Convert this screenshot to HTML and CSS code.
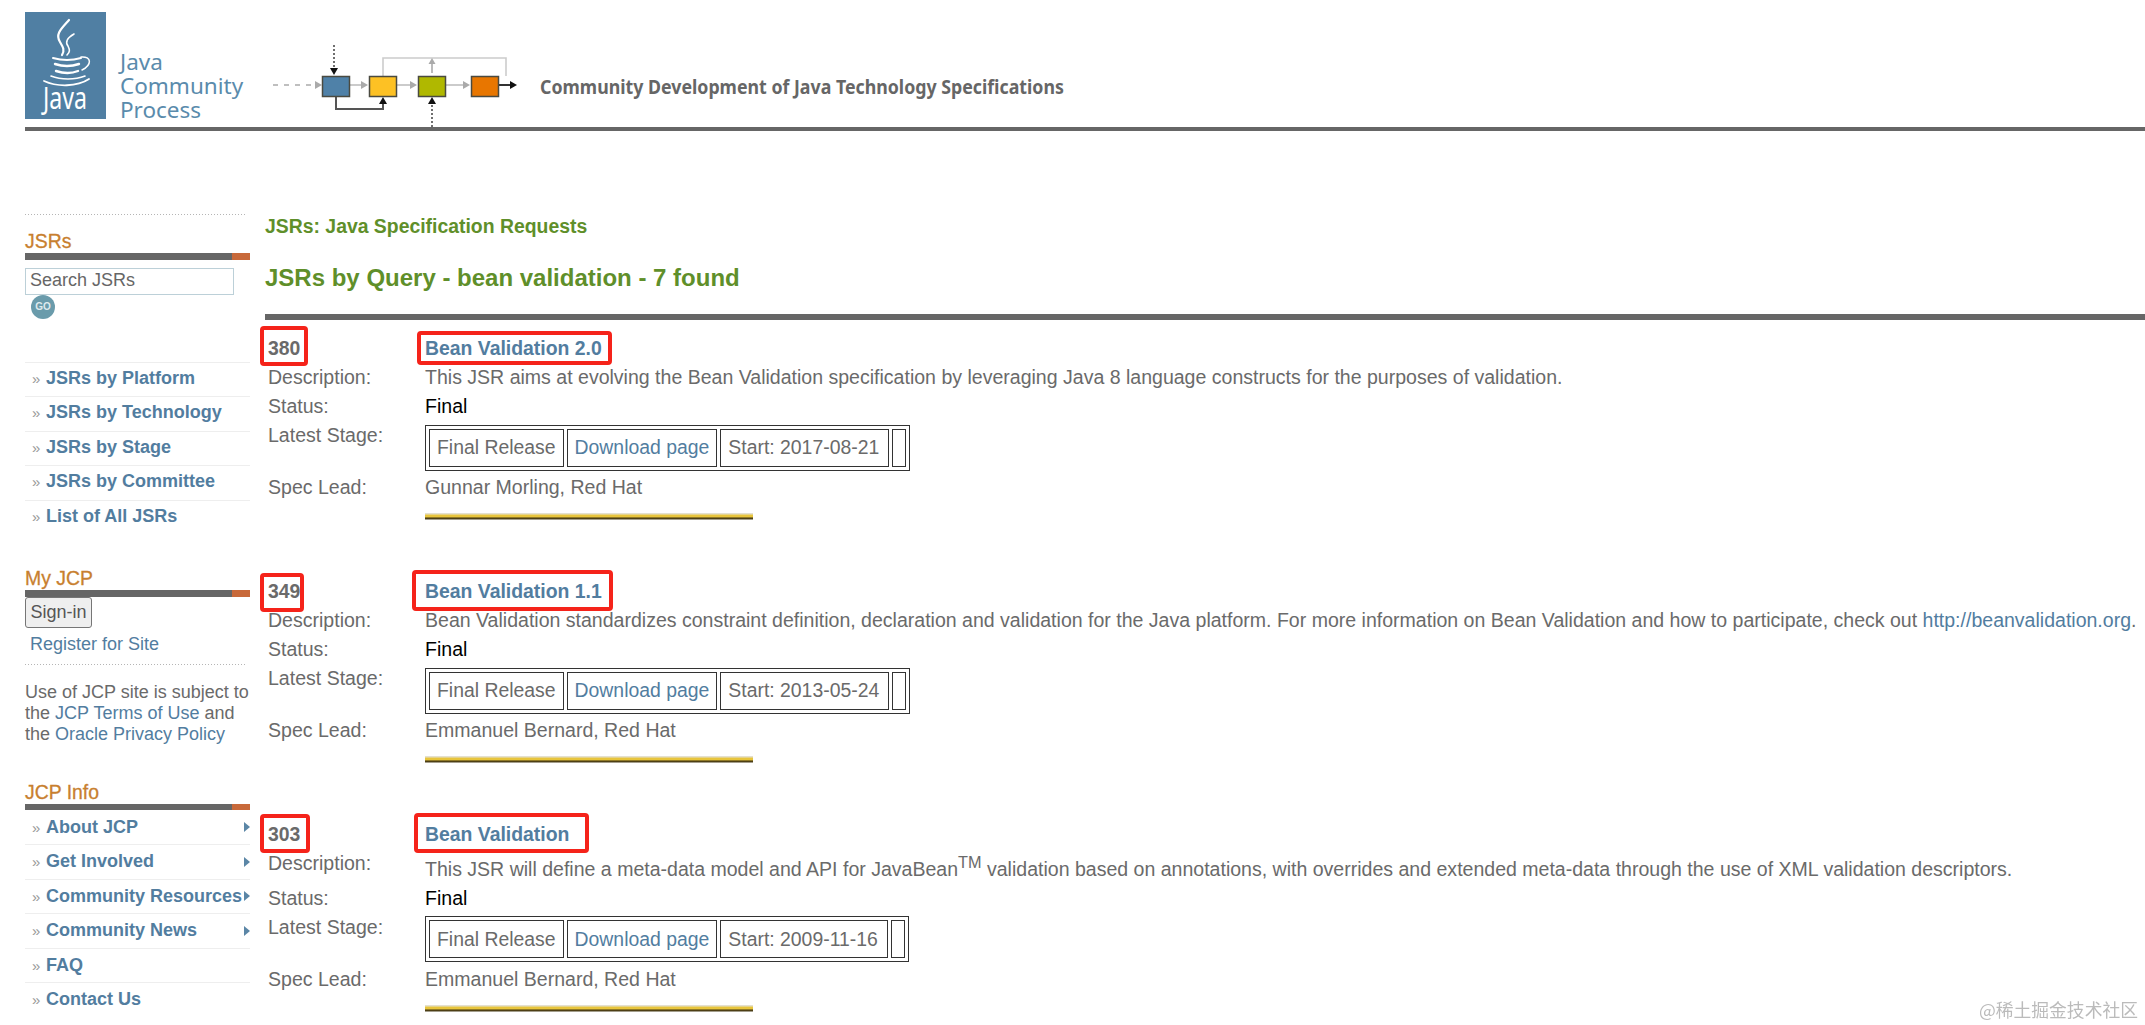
FILE: index.html
```html
<!DOCTYPE html>
<html lang="en">
<head>
<meta charset="utf-8">
<title>JSRs by Query - bean validation</title>
<link rel="stylesheet" href="styles.css">
</head>
<body>
<header class="site-header">
  <div class="banner">
    <svg class="java-logo" width="81" height="107" viewBox="0 0 81 107" aria-label="Java">
      <rect width="81" height="107" fill="#507fa3"/>
      <g fill="none" stroke="#fff" stroke-linecap="round">
        <path d="M44 8C36 17 30 22 35 30C38 35 40 38 37 43" stroke-width="2.2"/>
        <path d="M49 22C42 26 40 30 43 34C45 38 45 40 42 43" stroke-width="1.6"/>
        <path d="M28 46Q42 50 56 46" stroke-width="2"/>
        <path d="M56 45C67 44 67 53 57 58" stroke-width="1.5"/>
        <path d="M30 52Q42 56 54 52" stroke-width="2.4"/>
        <path d="M31 59Q43 63 53 59" stroke-width="2.4"/>
        <path d="M26 64C36 68 50 68 60 64" stroke-width="1.6"/>
        <path d="M19 69C32 75 52 75 64 67" stroke-width="1.8"/>
      </g>
      <text x="18" y="97" class="java-word" textLength="44" lengthAdjust="spacingAndGlyphs">Java</text>
    </svg>
    <div class="jcp-name">Java<br>Community<br>Process</div>
    <svg class="flow" width="246" height="82" viewBox="0 0 246 82" aria-hidden="true">
      <g fill="none" stroke="#bbb" stroke-width="1.6">
        <path d="M1 40H44" stroke-dasharray="5 6" stroke="#aaa"/>
        <path d="M78 40H90M125 40H139M174 40H192"/>
        <path d="M111 31V13H234V31" stroke="#ccc"/>
        <path d="M160 28V19" stroke="#aaa"/>
      </g>
      <g fill="#aaa">
        <path d="M50 40l-7-4v8z"/>
        <path d="M96 40l-7-4v8z"/>
        <path d="M145 40l-7-4v8z"/>
        <path d="M198 40l-7-4v8z"/>
        <path d="M160 13l-3.500 6h7z"/>
      </g>
      <g fill="none" stroke="#333" stroke-width="1.400">
        <path d="M62 0V23" stroke-dasharray="2 2"/>
        <path d="M160 82V58" stroke-dasharray="2 2"/>
        <path d="M64 51V64H111V57" stroke="#555" stroke-width="2"/>
        <path d="M227 40H238" stroke-width="2"/>
      </g>
      <g fill="#111">
        <path d="M62 30l-4-7h8z"/>
        <path d="M160 52l-4 7h8z"/>
        <path d="M111 52l-4 7h8z"/>
        <path d="M245 40l-7-4v8z"/>
      </g>
      <g stroke="#4a4a40" stroke-width="1.500">
        <rect x="50.500" y="31.500" width="27" height="20" fill="#4f81a8"/>
        <rect x="97.500" y="31.500" width="27" height="20" fill="#fdc124"/>
        <rect x="146.500" y="31.500" width="27" height="20" fill="#b0b800"/>
        <rect x="199.500" y="31.500" width="27" height="20" fill="#e87600"/>
      </g>
    </svg>
    <div class="tagline">Community Development of Java Technology Specifications</div>
  </div>
</header>

<div class="layout">
  <aside class="sidebar">
    <section class="side-section first">
      <h3 class="side-title">JSRs</h3>
      <div class="side-bar"></div>
      <form class="search">
        <input class="search-input" type="text" value="Search JSRs">
        <span class="go">GO</span>
      </form>
      <ul class="side-nav spaced">
        <li><a href="#">JSRs by Platform</a></li>
        <li><a href="#">JSRs by Technology</a></li>
        <li><a href="#">JSRs by Stage</a></li>
        <li><a href="#">JSRs by Committee</a></li>
        <li><a href="#">List of All JSRs</a></li>
      </ul>
    </section>

    <section class="side-section my-jcp">
      <h3 class="side-title">My JCP</h3>
      <div class="side-bar"></div>
      <button class="signin" type="button">Sign-in</button>
      <a class="register" href="#">Register for Site</a>
      <div class="terms">
        <div>Use of JCP site is subject to</div>
        <div>the <a href="#">JCP Terms of Use</a> and</div>
        <div>the <a href="#">Oracle Privacy Policy</a></div>
      </div>
    </section>

    <section class="side-section jcp-info">
      <h3 class="side-title">JCP Info</h3>
      <div class="side-bar"></div>
      <ul class="side-nav">
        <li class="more"><a href="#">About JCP</a></li>
        <li class="more"><a href="#">Get Involved</a></li>
        <li class="more"><a href="#">Community Resources</a></li>
        <li class="more"><a href="#">Community News</a></li>
        <li><a href="#">FAQ</a></li>
        <li><a href="#">Contact Us</a></li>
      </ul>
    </section>
  </aside>

  <main class="content">
    <div class="crumb">JSRs: Java Specification Requests</div>
    <h1 class="page-title">JSRs by Query - bean validation - 7 found</h1>
    <div class="page-rule"></div>

    <article class="jsr">
      <div class="jsr-num">380</div><div class="jsr-title"><a href="#">Bean Validation 2.0</a></div>
      <div class="lbl">Description:</div><div>This JSR aims at evolving the Bean Validation specification by leveraging Java 8 language constructs for the purposes of validation.</div>
      <div class="lbl">Status:</div><div class="final">Final</div>
      <div class="lbl">Latest Stage:</div>
      <div><table class="stage"><tr><td>Final Release</td><td><a href="#">Download page</a></td><td>Start: 2017-08-21</td><td></td></tr></table></div>
      <div class="lbl">Spec Lead:</div><div>Gunnar Morling, Red Hat</div>
      <div class="gold"></div>
      <span class="mark num-a"></span><span class="mark title-a"></span>
    </article>

    <article class="jsr">
      <div class="jsr-num">349</div><div class="jsr-title"><a href="#">Bean Validation 1.1</a></div>
      <div class="lbl">Description:</div><div>Bean Validation standardizes constraint definition, declaration and validation for the Java platform. For more information on Bean Validation and how to participate, check out <a href="#">http://beanvalidation.org</a>.</div>
      <div class="lbl">Status:</div><div class="final">Final</div>
      <div class="lbl">Latest Stage:</div>
      <div><table class="stage"><tr><td>Final Release</td><td><a href="#">Download page</a></td><td>Start: 2013-05-24</td><td></td></tr></table></div>
      <div class="lbl">Spec Lead:</div><div>Emmanuel Bernard, Red Hat</div>
      <div class="gold"></div>
      <span class="mark num-b"></span><span class="mark title-b"></span>
    </article>

    <article class="jsr">
      <div class="jsr-num">303</div><div class="jsr-title"><a href="#">Bean Validation</a></div>
      <div class="lbl">Description:</div><div>This JSR will define a meta-data model and API for JavaBean<sup>TM</sup> validation based on annotations, with overrides and extended meta-data through the use of XML validation descriptors.</div>
      <div class="lbl">Status:</div><div class="final">Final</div>
      <div class="lbl">Latest Stage:</div>
      <div><table class="stage"><tr><td>Final Release</td><td><a href="#">Download page</a></td><td>Start: 2009-11-16</td><td></td></tr></table></div>
      <div class="lbl">Spec Lead:</div><div>Emmanuel Bernard, Red Hat</div>
      <div class="gold"></div>
      <span class="mark num-c"></span><span class="mark title-c"></span>
    </article>
  </main>
</div>
<div class="watermark">@稀土掘金技术社区</div>
</body>
</html>
```

FILE: styles.css
```css
* { box-sizing: border-box; }
html, body { margin: 0; padding: 0; height: 1025px; overflow: hidden; background: #fff; }
body { font-family: "Liberation Sans", Arial, sans-serif; font-size: 18px; color: #6a6a6a; }
a { color: #527d9f; text-decoration: none; }

/* header */
.site-header { padding-left: 25px; }
.banner { display: flex; align-items: flex-start; height: 131px; padding-top: 12px; border-bottom: 4px solid #666; }
.java-logo { flex: none; display: block; }
.java-word { font-family: "Noto Sans", sans-serif; font-size: 30px; fill: #fff; }
.jcp-name { margin: 38px 0 0 14px; font-family: "Noto Sans", sans-serif; font-size: 22.5px; line-height: 24px; color: #5a8bac; width: 123px; }
.flow { flex: none; display: block; margin: 33px 0 0 29px; }
.tagline { margin: 63px 0 0 22px; font-family: "Noto Sans", sans-serif; font-weight: 700; font-size: 20px; line-height: 24px; color: #666; white-space: nowrap; transform: scaleX(.888); transform-origin: left center; }

/* layout */
.layout { display: flex; align-items: flex-start; padding: 83px 0 0 25px; }
.sidebar { flex: none; width: 225px; }
.content { flex: 1; min-width: 0; margin-left: 15px; }

/* sidebar */
.side-section.first { padding-top: 15px; background: repeating-linear-gradient(to right, #b5b5b5 0 1px, transparent 1px 3px) no-repeat left top / 222px 1px; }
.side-title { margin: 0; font-size: 19.4px; font-weight: 400; line-height: 24px; color: #c87f2f; -webkit-text-stroke: .3px #c87f2f; }
.side-bar { height: 6.5px; background: linear-gradient(to right, #666 207px, #c8693a 207px); }
.search { display: block; }
.search-input { display: block; width: 209px; height: 27px; margin: 8px 0 0; padding: 0 4px 2px; border: 1px solid #bcd0d8; font: 18px "Liberation Sans", Arial, sans-serif; color: #666; background: #fff; outline: 0; }
.go { display: flex; align-items: center; justify-content: center; width: 24px; height: 24px; margin-left: 6px; border-radius: 50%; background: #6a9bab; color: #dfeaee; font-size: 10px; font-weight: 700; }
.side-nav { list-style: none; margin: 0; padding: 0; }
.side-nav.spaced { margin-top: 43px; }
.side-nav.spaced li { padding-bottom: 2px; }
.side-nav li { position: relative; display: flex; align-items: center; height: 34.5px; padding-left: 7px; border-top: 1px solid #eee; }
.side-nav li::before { content: "\00bb"; width: 14px; font-size: 15px; color: #999; }
.side-nav a { font-weight: 700; white-space: nowrap; }
.jcp-info .side-nav li:first-child { height: 34px; border-top: 0; }
.side-nav li.more::after { content: ""; position: absolute; right: 0; top: 50%; margin-top: -5px; border-left: 6px solid #5b86a6; border-top: 5px solid transparent; border-bottom: 5px solid transparent; }
.my-jcp { margin-top: 32px; }
.signin { display: block; width: 67px; height: 31px; padding: 0; border: 1px solid #767676; border-radius: 3px; background: #efefef; font: 18px "Liberation Sans", Arial, sans-serif; color: #555; }
.register { display: block; margin-top: 3px; padding: 0 0 8px 5px; line-height: 26px; background: repeating-linear-gradient(to right, #b5b5b5 0 1px, transparent 1px 3px) no-repeat left bottom / 222px 1px; }
.terms { margin: 17px 0 0; line-height: 21px; white-space: nowrap; }
.jcp-info { margin-top: 35px; }

/* main */
.crumb { font-size: 19.4px; font-weight: 700; line-height: 24px; color: #5f8f2a; }
.page-title { margin: 25px 0 0; font-size: 24px; font-weight: 700; line-height: 30px; color: #5f8f2a; }
.page-rule { height: 6px; margin: 21px 0 14px; background: #666; }

.jsr { position: relative; display: grid; grid-template-columns: 157px 1fr; padding-left: 3px; margin-bottom: 57px; font-size: 19.55px; line-height: 29px; }
.jsr:last-child { margin-bottom: 0; }
.jsr-num { font-weight: 700; font-size: 19.4px; }
.jsr-title { font-weight: 700; font-size: 19.4px; }
.final { color: #000; }
sup { line-height: 27px; }

.stage { margin: 3.500px 0 2.500px; border: 1px solid #333; border-spacing: 3px; border-collapse: separate; font-size: 19.4px; line-height: 21px; }
.stage td { padding: 7.500px 7px; border: 1px solid #333; white-space: nowrap; }
.stage td:nth-child(3) { padding-right: 9px; }
.stage td:last-child { padding: 7.500px 6px; }

.gold { grid-column: 2; width: 328px; height: 7px; margin: 11px 0 0; background: linear-gradient(to bottom, #e4e0cf 0, #e4e0cf 14%, #e8c53c 30%, #e8c53c 57%, #4d3f14 70%, #4d3f14 82%, #dcdcdc 100%); }

/* red annotation boxes drawn over the page */
.mark { position: absolute; border: 4.500px solid #f5231a; border-radius: 4px; }
.num-a { left: -5px; top: -8px; width: 48px; height: 40px; }
.title-a { left: 152px; top: -3px; width: 195px; height: 34px; }
.num-b { left: -5px; top: -4px; width: 44px; height: 39px; }
.title-b { left: 147px; top: -7px; width: 201px; height: 41px; }
.num-c { left: -5px; top: -6px; width: 50px; height: 39px; }
.title-c { left: 149px; top: -7px; width: 175px; height: 40px; }

.watermark { position: fixed; right: 7px; bottom: 4px; font-family: "Noto Sans CJK SC", sans-serif; font-size: 17.8px; line-height: 24px; color: #bbb; }
```
